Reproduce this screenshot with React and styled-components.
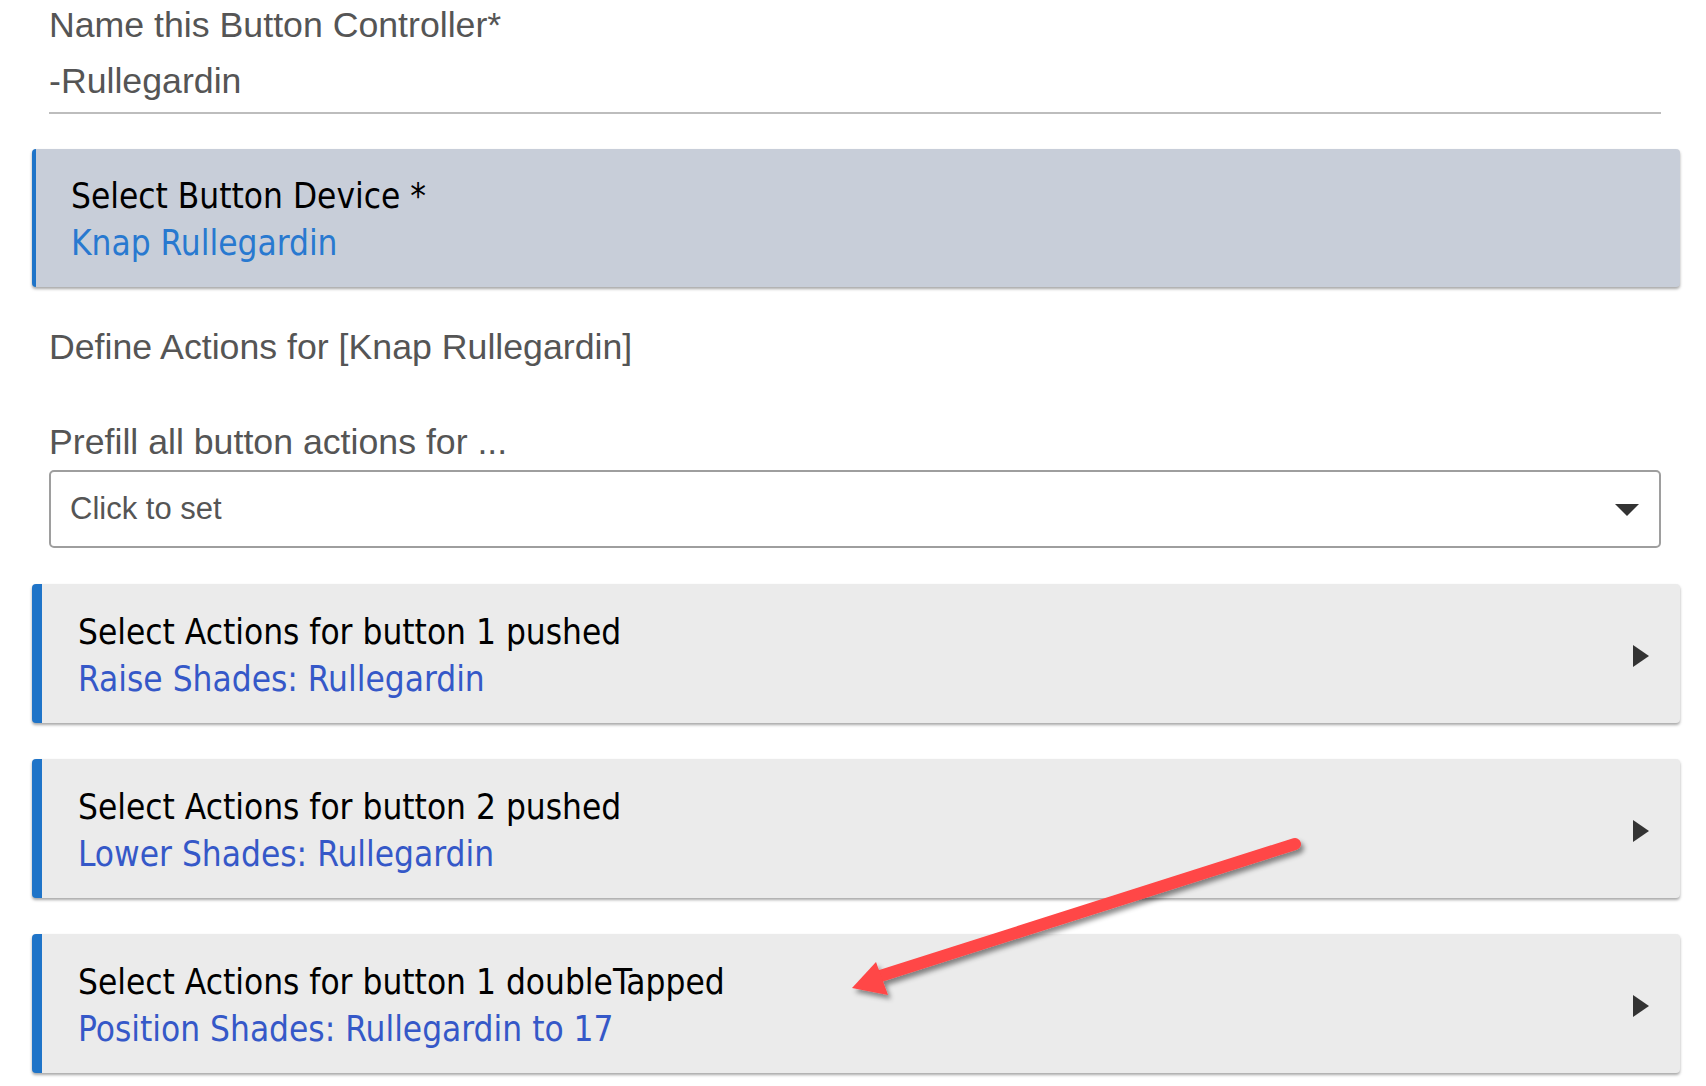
import styled, { createGlobalStyle } from 'styled-components';

const GlobalStyle = createGlobalStyle`
  html, body {
    margin: 0;
    padding: 0;
    background: #ffffff;
  }
  body {
    font-family: "Liberation Sans", Arial, sans-serif;
  }
`;

const Page = styled.div`
  position: relative;
  width: 1706px;
  height: 1086px;
  overflow: hidden;
  box-sizing: border-box;
  padding: 5px 26px 0 32px;
  display: flex;
  flex-direction: column;
`;

const Field = styled.div`
  margin: 0 19px 0 17px;
  display: flex;
  flex-direction: column;
`;

const Label = styled.div`
  font-family: "Liberation Sans", Arial, sans-serif;
  font-size: 35.7px;
  line-height: 1.15;
  color: #555555;
  margin-top: ${p => p.$top || 0}px;
`;

const NameInput = styled.div`
  font-family: "Liberation Sans", Arial, sans-serif;
  font-size: 35.7px;
  line-height: 1.15;
  color: #555555;
  margin-top: 15px;
  padding-bottom: 10px;
  border-bottom: 2px solid #bdbdbd;
`;

const Card = styled.div`
  margin-top: ${p => p.$top}px;
  display: flex;
  align-items: center;
  justify-content: space-between;
  box-sizing: border-box;
  height: ${p => (p.$active ? 138 : 139)}px;
  padding: 24px 31px 20px ${p => (p.$active ? 35 : 36)}px;
  background: ${p => (p.$active ? '#c8ced9' : '#ebebeb')};
  border-left: ${p => (p.$active ? 4 : 10)}px solid #1f74c8;
  border-radius: 4px;
  box-shadow: 0 2px 3px rgba(0, 0, 0, 0.35);
`;

const CardText = styled.div`
  display: flex;
  flex-direction: column;
  font-family: "DejaVu Sans Condensed", "DejaVu Sans", sans-serif;
  font-stretch: condensed;
  font-size: 34.9px;
  line-height: 47px;
`;

const CardTitle = styled.div`
  color: #000000;
`;

const CardValue = styled.div`
  color: ${p => (p.$active ? '#2879d0' : '#3558c8')};
`;

const Chevron = styled.span`
  width: 0;
  height: 0;
  border-top: 11px solid transparent;
  border-bottom: 11px solid transparent;
  border-left: 16px solid #333333;
`;

const SelectBox = styled.div`
  margin-top: 7px;
  height: 78px;
  box-sizing: border-box;
  border: 2px solid #9e9e9e;
  border-radius: 5px;
  display: flex;
  align-items: center;
  justify-content: space-between;
  padding: 0 20px 0 19px;
  font-family: "Liberation Sans", Arial, sans-serif;
  font-size: 31px;
  color: #555555;
`;

const Caret = styled.span`
  width: 0;
  height: 0;
  border-left: 12px solid transparent;
  border-right: 12px solid transparent;
  border-top: 12px solid #333333;
  margin-top: 2px;
`;

const Annotation = styled.svg`
  position: absolute;
  left: 0;
  top: 0;
  width: 1706px;
  height: 1086px;
  pointer-events: none;
`;

const actions = [
  { id: 1, title: 'Select Actions for button 1 pushed', value: 'Raise Shades: Rullegardin' },
  { id: 2, title: 'Select Actions for button 2 pushed', value: 'Lower Shades: Rullegardin' },
  { id: 3, title: 'Select Actions for button 1 doubleTapped', value: 'Position Shades: Rullegardin to 17' },
];

export default function App() {
  return (
    <>
      <GlobalStyle />
      <Page>
        <Field>
          <Label>Name this Button Controller*</Label>
          <NameInput>-Rullegardin</NameInput>
        </Field>

        <Card $active $top={35}>
          <CardText>
            <CardTitle>Select Button Device *</CardTitle>
            <CardValue $active>Knap Rullegardin</CardValue>
          </CardText>
        </Card>

        <Field>
          <Label $top={40}>Define Actions for [Knap Rullegardin]</Label>
          <Label $top={54}>Prefill all button actions for ...</Label>
          <SelectBox>
            <span>Click to set</span>
            <Caret />
          </SelectBox>
        </Field>

        {actions.map(a => (
          <Card key={a.id} $top={36}>
            <CardText>
              <CardTitle>{a.title}</CardTitle>
              <CardValue>{a.value}</CardValue>
            </CardText>
            <Chevron />
          </Card>
        ))}

        <Annotation viewBox="0 0 1706 1086">
          <defs>
            <filter id="shadow" x="-10%" y="-10%" width="120%" height="130%">
              <feDropShadow dx="3" dy="4" stdDeviation="2.5" floodColor="#000" floodOpacity="0.45" />
            </filter>
          </defs>
          <g filter="url(#shadow)">
            <line x1="1295" y1="844" x2="874" y2="978" stroke="#ff4646" strokeWidth="12" strokeLinecap="round" />
            <polygon points="852,988 876,962 888,995" fill="#ff4646" />
          </g>
        </Annotation>
      </Page>
    </>
  );
}
